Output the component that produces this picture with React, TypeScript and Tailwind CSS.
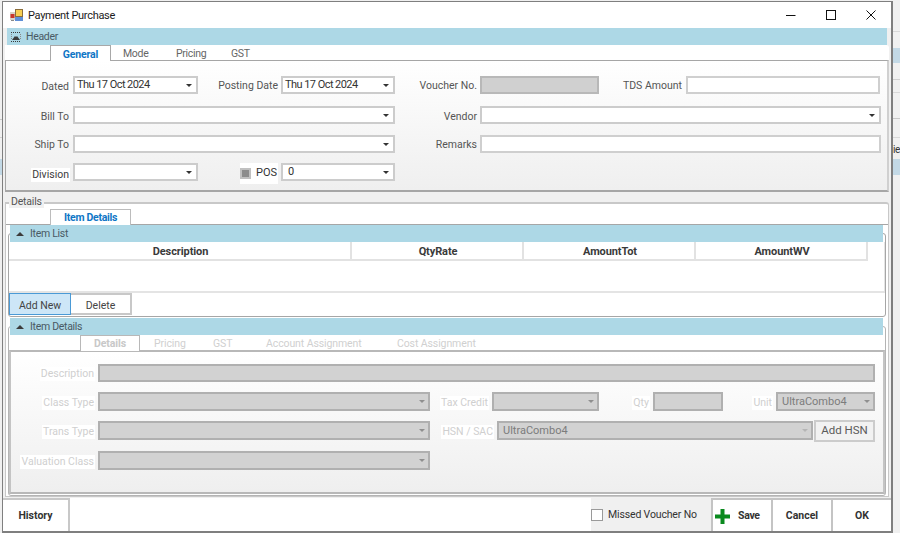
import React from "react";

const Caret = ({ color = "#333333" }: { color?: string }) => (
  <svg width="6" height="3" viewBox="0 0 6 3" className="shrink-0">
    <path d="M0 0H6L3 3Z" fill={color} />
  </svg>
);

const Label = ({ className = "", children }: { className?: string; children?: React.ReactNode }) => (
  <div className={`flex items-center justify-end shrink-0 text-[10.5px] text-[#555555] whitespace-nowrap ${className}`}>{children}</div>
);

const Combo = ({ className = "", text, pad = "pl-[2px] pr-[4px]" }: { className?: string; text?: string; pad?: string }) => (
  <div className={`flex items-center justify-between bg-white border-2 border-[#cccccc] shrink-0 text-[11px] tracking-[-0.55px] text-[#333333] ${pad} ${className}`}>
    <span className="mt-[1px]">{text}</span>
    <Caret />
  </div>
);

const Box = ({ className = "" }: { className?: string }) => (
  <div className={`bg-white border-2 border-[#cfcfcf] shrink-0 ${className}`} />
);

const OffLabel = ({ className = "", children }: { className?: string; children: React.ReactNode }) => (
  <div className={`flex items-center justify-end shrink-0 pr-[1px] pt-[2px] ${className}`}>
    <span className="bg-white text-[10.5px] leading-[14px] text-[#cfcfcf] whitespace-nowrap px-[1px]">{children}</span>
  </div>
);

const OffCombo = ({ className = "", text, caret = "#8f8f8f" }: { className?: string; text?: string; caret?: string }) => (
  <div className={`flex items-center justify-between bg-[#d2d2d2] border-2 border-[#b0b0b0] shrink-0 pl-[4px] pr-[3px] text-[11px] text-[#7c7c7c] ${className}`}>
    <span className="mt-[1px]">{text}</span>
    <Caret color={caret} />
  </div>
);

const Band = ({ className = "", label, icon }: { className?: string; label: string; icon: React.ReactNode }) => (
  <div className={`relative z-10 flex items-center bg-[#add8e6] shrink-0 text-[10.5px] tracking-[-0.3px] text-[#4a5a64] ${className}`}>
    {icon}
    <span>{label}</span>
  </div>
);

const UpArrow = () => (
  <svg width="8" height="4" viewBox="0 0 8 4" className="ml-[6px] mr-[6px] shrink-0">
    <path d="M0 4L4 0L8 4Z" fill="#3c3c3c" />
  </svg>
);

const HeaderIcon = () => (
  <svg width="10" height="10" viewBox="0 0 10 10" className="ml-[4px] mr-[5px] shrink-0">
    <path d="M0 .5H10M0 9.5H10" stroke="#3a3a3a" strokeDasharray="1 1" />
    <path d="M.5 2V8M9.5 2V8" stroke="#8a8a8a" strokeDasharray="1 1" />
    <path d="M1 8L4 4L5 5L6 4L9 8Z" fill="#3a3a3a" />
  </svg>
);

const HeadCell = ({ className = "", children }: { className?: string; children: React.ReactNode }) => (
  <div className={`flex items-center justify-center h-full pl-[2px] pt-[3px] border-r-2 border-[#e2e2e2] text-[11px] tracking-[-0.1px] font-bold text-[#3a3a3a] shrink-0 ${className}`}>{children}</div>
);

const FootBtn = ({ className = "", children }: { className?: string; children: React.ReactNode }) => (
  <div className={`flex items-center justify-center h-full pt-[1px] bg-white border-l-2 border-t-2 border-[#c4c4c4] text-[10.5px] font-bold text-[#333333] shrink-0 ${className}`}>{children}</div>
);

export default function App() {
  return (
    <div className="flex w-[900px] h-[533px] overflow-hidden bg-[#f0f0f0] font-['Roboto',Arial,sans-serif]">
      {/* sliver of the window behind, left */}
      <div className="w-[2px] shrink-0 flex flex-col">
        <div className="h-[119px] shrink-0" />
        <div className="h-px bg-[#c8c8c8] shrink-0" />
        <div className="h-[17px] shrink-0" />
        <div className="h-px bg-[#d0d0d0] shrink-0" />
        <div className="h-[21px] shrink-0" />
        <div className="h-[16px] bg-[#c3d9e6] shrink-0" />
      </div>

      {/* window */}
      <div className="flex flex-col w-[891px] h-[532px] mt-px shrink-0 bg-[#f0f0f0] border-l border-t border-r-2 border-b-2 border-[#7f7f7f]">
        {/* title bar */}
        <div className="flex items-center h-[26px] bg-white shrink-0">
          <svg width="13" height="13" viewBox="0 0 13 13" className="ml-[7px] mr-[5px] shrink-0">
            <rect x="5.5" y="0.5" width="7" height="7" fill="#f7cf52" stroke="#8a6d3b" />
            <rect x="5" y="8" width="8" height="4" fill="#5f8fd6" />
            <rect x="0" y="3" width="5" height="8" fill="#d9d2c8" />
            <rect x="0.5" y="5" width="4" height="4" fill="#c8362c" />
            <rect x="1" y="11" width="3" height="1" fill="#8a8a8a" />
          </svg>
          <span className="mt-[2px] text-[11px] tracking-[-0.3px] text-[#1c1c1c]">Payment Purchase</span>
          <div className="ml-auto flex items-center">
            <svg width="10" height="10" viewBox="0 0 10 10" className="mr-[30px]">
              <path d="M0 5.5H9.5" stroke="#111111" />
            </svg>
            <svg width="10" height="10" viewBox="0 0 10 10" className="mr-[30px]">
              <rect x=".5" y=".5" width="9" height="9" fill="none" stroke="#111111" />
            </svg>
            <svg width="10" height="10" viewBox="0 0 10 10" className="mr-[15px]">
              <path d="M.5 .5L9.5 9.5M9.5 .5L.5 9.5" stroke="#111111" />
            </svg>
          </div>
        </div>

        {/* header */}
        <Band className="ml-[4px] w-[880px] h-[17px]" label="Header" icon={<HeaderIcon />} />
        <div className="ml-[2px] w-[884px] flex flex-col shrink-0">
          <div className="flex items-end h-[15px] bg-white pl-[45px] text-[10.5px] tracking-[-0.3px] text-[#666666] rounded-tr-[3px]">
            <div className="flex items-center justify-center w-[61px] h-[16px] pt-[2px] -mb-px bg-white border-l border-t border-r border-[#a8a8a8] border-b-0 z-10 font-bold tracking-[-0.15px] text-[#0f76c6]">General</div>
            <div className="flex items-center h-[15px] pt-[3px] pl-[12px] w-[65px]">Mode</div>
            <div className="flex items-center h-[15px] pt-[3px] w-[55px]">Pricing</div>
            <div className="flex items-center h-[15px] pt-[3px]">GST</div>
          </div>
          <div className="flex flex-col h-[132px] border-t border-b-2 border-l border-r-2 border-[#a6a6a6] border-r-[#d0d0d0] bg-gradient-to-b from-white to-[#efefef] pt-[15px]">
            <div className="flex h-[18px]">
              <Label className="w-[63px] pt-[3px]">Dated</Label>
              <Combo className="ml-[4px] w-[125px]" text="Thu 17 Oct 2024" />
              <Label className="w-[80px] pt-[2px]">Posting Date</Label>
              <Combo className="ml-[3px] w-[114px]" text="Thu 17 Oct 2024" />
              <Label className="w-[82px] pt-[1px]">Voucher No.</Label>
              <div className="ml-[3px] w-[119px] bg-[#d0d0d0] border-2 border-[#b8b8b8] shrink-0" />
              <Label className="w-[83px] pt-[2px]">TDS Amount</Label>
              <Box className="ml-[4px] w-[194px]" />
            </div>
            <div className="flex h-[18px] mt-[12px]">
              <Label className="w-[63px] pt-[3px]">Bill To</Label>
              <Combo className="ml-[4px] w-[322px]" />
              <Label className="w-[82px] pt-[3px]">Vendor</Label>
              <Combo className="ml-[3px] w-[401px]" />
            </div>
            <div className="flex h-[18px] mt-[11px]">
              <Label className="w-[63px] pt-[2px]">Ship To</Label>
              <Combo className="ml-[4px] w-[322px]" />
              <Label className="w-[82px] pt-[2px]">Remarks</Label>
              <Box className="ml-[3px] w-[401px]" />
            </div>
            <div className="flex h-[18px] mt-[10px]">
              <Label className="w-[64px] pt-[5px]"><span className="bg-white text-[#3c3c3c] leading-[14px] px-[1px]">Division</span></Label>
              <Combo className="ml-[3px] w-[125px]" />
              <div className="flex items-center justify-between ml-[42px] w-[38px] h-[21px] bg-white shrink-0 text-[11px] text-[#333333] pr-[1px]">
                <div className="flex items-center justify-center w-[11px] h-[11px] border-2 border-[#c0c0c0]"><div className="w-[7px] h-[7px] bg-[#8c8c8c]" /></div>
                <span>POS</span>
              </div>
              <Combo className="ml-[3px] w-[114px]" text="0" pad="pl-[5px] pr-[4px]" />
            </div>
          </div>
        </div>

        {/* details */}
        <div className="relative ml-[2px] mt-[10px] w-[884px] h-[295px] shrink-0 flex flex-col bg-white border-t-2 border-l border-r border-b border-[#c8c8c8] rounded-tr-[3px]">
          <span className="absolute -top-[9px] left-[3px] px-[2px] bg-[#f0f0f0] text-[10.5px] tracking-[-0.2px] leading-[13px] text-[#555555]">Details</span>
          <div className="flex items-end h-[20px] pl-[44px] shrink-0">
            <div className="flex items-center justify-center w-[81px] h-[16px] -mb-px z-10 bg-white border-l border-t border-r border-[#bcbcbc] text-[10.5px] tracking-[-0.3px] font-bold text-[#0f76c6]">Item Details</div>
          </div>
          <div className="flex flex-col flex-1 border-t border-[#a6a6a6] bg-white">
            {/* Item List group */}
            <div className="relative ml-[2px] w-[878px] h-[92px] shrink-0 flex flex-col">
              <div className="absolute inset-x-0 top-[8px] bottom-0 border border-[#a6a6a6] rounded-[3px]" />
              <Band className="ml-[2px] w-[873px] h-[17px]" label="Item List" icon={<UpArrow />} />
              <div className="relative ml-[1px] w-[876px] h-[51px] flex flex-col border-b-2 border-r border-[#e4e4e4] shrink-0">
                <div className="flex h-[19px] shrink-0 border-b-2 border-[#e2e2e2] w-[859px]">
                  <HeadCell className="w-[343px]">Description</HeadCell>
                  <HeadCell className="w-[172px]">QtyRate</HeadCell>
                  <HeadCell className="w-[172px]">AmountTot</HeadCell>
                  <HeadCell className="w-[172px]">AmountWV</HeadCell>
                </div>
              </div>
              <div className="relative flex h-[23px] ml-[1px] shrink-0">
                <div className="flex items-center justify-center w-[62px] h-[22px] pt-[3px] bg-[#cde6f7] border border-[#4a9ad6] text-[10.5px] text-[#444444] shrink-0">Add New</div>
                <div className="flex items-center justify-center w-[61px] h-[22px] pt-[3px] bg-white border-2 border-l-0 border-[#c8c8c8] text-[10.5px] text-[#444444] shrink-0">Delete</div>
              </div>
            </div>
            {/* Item Details group */}
            <div className="relative ml-[2px] mt-[1px] w-[878px] flex-1 flex flex-col">
              <div className="absolute inset-x-0 top-[8px] bottom-0 border border-[#b4b4b4] rounded-[3px]" />
              <Band className="ml-[2px] w-[873px] h-[17px]" label="Item Details" icon={<UpArrow />} />
              <div className="relative flex items-end h-[15px] ml-[1px] w-[876px] pl-[71px] shrink-0 text-[10.5px] tracking-[-0.1px] text-[#d0d0d0]">
                <div className="flex items-center justify-center w-[60px] h-[16px] -mb-px z-10 bg-white border-l border-t border-r border-[#b8b8b8] font-bold text-[#c8c8c8]">Details</div>
                <div className="flex items-center h-[15px] pt-[2px] pl-[14px] w-[73px]">Pricing</div>
                <div className="flex items-center h-[15px] pt-[2px] w-[53px]">GST</div>
                <div className="flex items-center h-[15px] pt-[2px] w-[131px]">Account Assignment</div>
                <div className="flex items-center h-[15px] pt-[2px]">Cost Assignment</div>
              </div>
              <div className="relative flex flex-col ml-[1px] mb-[2px] w-[876px] flex-1 border-2 border-[#b8b8b8] border-x-[#c4c4c4] bg-gradient-to-b from-white to-[#efefef] pt-[12px]">
                <div className="flex h-[18px]">
                  <OffLabel className="w-[85px]">Description</OffLabel>
                  <div className="ml-[2px] w-[777px] bg-[#d2d2d2] border-2 border-[#b0b0b0] shrink-0" />
                </div>
                <div className="flex h-[19px] mt-[10px]">
                  <OffLabel className="w-[85px]">Class Type</OffLabel>
                  <OffCombo className="ml-[2px] w-[332px]" />
                  <OffLabel className="w-[60px]">Tax Credit</OffLabel>
                  <OffCombo className="ml-[2px] w-[107px]" />
                  <OffLabel className="w-[52px]">Qty</OffLabel>
                  <div className="ml-[2px] w-[70px] bg-[#d2d2d2] border-2 border-[#b0b0b0] shrink-0" />
                  <OffLabel className="w-[51px]">Unit</OffLabel>
                  <OffCombo className="ml-[2px] w-[99px]" text="UltraCombo4" />
                </div>
                <div className="flex h-[19px] mt-[10px]">
                  <OffLabel className="w-[85px]">Trans Type</OffLabel>
                  <OffCombo className="ml-[2px] w-[332px]" />
                  <OffLabel className="w-[65px]">HSN / SAC</OffLabel>
                  <OffCombo className="ml-[2px] w-[316px]" text="UltraCombo4" caret="#b5b5b5" />
                  <div className="flex items-center justify-center ml-[1px] -mt-px w-[61px] h-[22px] bg-[#f2f2f2] border-2 border-[#cccccc] text-[11.5px] text-[#5a5a5a] shrink-0">Add HSN</div>
                </div>
                <div className="flex h-[19px] mt-[11px]">
                  <OffLabel className="w-[85px]">Valuation Class</OffLabel>
                  <OffCombo className="ml-[2px] w-[332px]" />
                </div>
              </div>
            </div>
          </div>
        </div>

        {/* footer */}
        <div className="flex items-stretch flex-1 mt-[1px] bg-white min-h-0">
          <div className="flex items-center justify-center w-[67px] pt-[1px] border-2 border-[#c8c8c8] border-l-0 border-b-0 text-[10.5px] font-bold text-[#333333] shrink-0">History</div>
          <div className="flex items-center ml-auto w-[120px] h-full bg-[#f0f0f0] shrink-0">
            <div className="w-[12px] h-[12px] bg-white border border-[#9a9a9a] shrink-0" />
            <span className="ml-[5px] mt-[1px] text-[10.5px] tracking-[-0.15px] text-[#333333] whitespace-nowrap">Missed Voucher No</span>
          </div>
          <FootBtn className="w-[60px] justify-start">
            <svg width="15" height="15" viewBox="0 0 15 15" className="ml-[2px] mr-[8px] shrink-0">
              <path d="M5.5 0H9.5V5.5H15V9.5H9.5V15H5.5V9.5H0V5.5H5.5Z" fill="#0a8a1e" />
            </svg>
            <span className="tracking-[-0.3px]">Save</span>
          </FootBtn>
          <FootBtn className="w-[60px]">Cancel</FootBtn>
          <FootBtn className="w-[60px]">OK</FootBtn>
        </div>
      </div>

      {/* sliver of the window behind, right */}
      <div className="flex flex-col w-[7px] shrink-0 overflow-hidden">
        <div className="h-[32px] shrink-0 border-b border-[#d8d8d8]" />
        <div className="h-[16px] shrink-0" />
        <div className="h-[15px] shrink-0 bg-[#c3d9e6]" />
        <div className="h-[17px] shrink-0 border-b border-[#d0d0d0]" />
        <div className="h-[13px] shrink-0 border-b border-[#d8d8d8]" />
        <div className="h-[26px] shrink-0 border-b border-[#c8c8c8]" />
        <div className="h-[19px] shrink-0 border-b border-[#d8d8d8]" />
        <div className="h-[21px] shrink-0 pt-[5px] text-[10px] tracking-[-0.5px] leading-[14px] text-[#333333]">ie</div>
        <div className="h-[16px] shrink-0 bg-[#c3d9e6]" />
      </div>
    </div>
  );
}
